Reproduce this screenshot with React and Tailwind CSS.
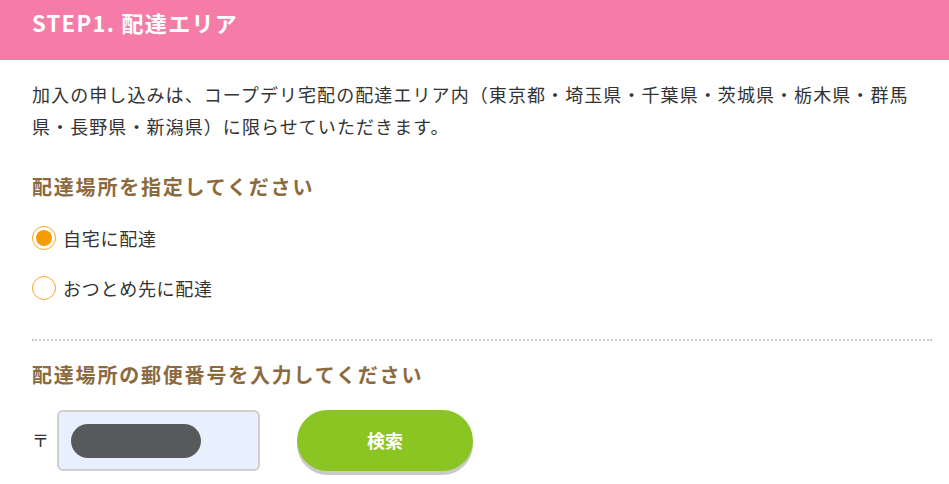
function Radio({ checked, label }) {
    return (
        <label className="flex items-center gap-[7px] h-[26px] cursor-pointer">
            <span className="w-[24px] h-[24px] rounded-full border-[1.5px] border-[#f5a623] bg-white flex items-center justify-center shrink-0">
                {checked && <span className="w-[16px] h-[16px] rounded-full bg-[#f59c00]" />}
            </span>
            <span className="text-[18px] tracking-[0.04em] text-[#333] leading-none">{label}</span>
        </label>
    );
}

export default function App() {
    return (
        <div className="w-[949px] h-[484px] bg-white overflow-hidden font-['Noto_Sans_CJK_JP',sans-serif]">
            {/* ヘッダー */}
            <div className="h-[60px] bg-[#f47ca7] pl-[32px] pt-[6px]">
                <h2 className="text-[22px] font-bold text-white tracking-[0.06em] leading-[32px]">STEP1. 配達エリア</h2>
            </div>

            <div className="ml-[32px] w-[900px]">
                <p className="mt-[18px] text-[18px] tracking-[0.06em] leading-[32px] text-[#333]">
                    加入の申し込みは、コープデリ宅配の配達エリア内（東京都・埼玉県・千葉県・茨城県・栃木県・群馬県・長野県・新潟県）に限らせていただきます。
                </p>

                <h3 className="mt-[31px] text-[20px] font-bold tracking-[0.09em] leading-[28px] text-[#8c6a3e]">
                    配達場所を指定してください
                </h3>

                <div className="mt-[24px] flex flex-col gap-[24px]">
                    <Radio checked label="自宅に配達" />
                    <Radio label="おつとめ先に配達" />
                </div>

                {/* 区切り線 */}
                <div className="mt-[38px] border-t-2 border-dotted border-[#cccccc]" />

                <h3 className="mt-[20px] text-[20px] font-bold tracking-[0.09em] leading-[28px] text-[#8c6a3e]">
                    配達場所の郵便番号を入力してください
                </h3>

                <div className="mt-[21px] flex items-start">
                    <span className="mt-[18px] w-[25px] text-[17px] text-[#333] leading-[24px]">〒</span>
                    <div className="w-[203px] h-[61px] rounded-[6px] border-2 border-[#cfcfcf] bg-[#e8f0fe] flex items-center pl-[12px]">
                        <div className="w-[130px] h-[34px] rounded-full bg-[#58595b]" />
                    </div>
                    <button className="ml-[37px] w-[176px] h-[61px] rounded-full bg-[#8bc524] text-white text-[18px] font-bold shadow-[0_4px_0_#c9c9c9]">
                        検索
                    </button>
                </div>
            </div>
        </div>
    );
}
